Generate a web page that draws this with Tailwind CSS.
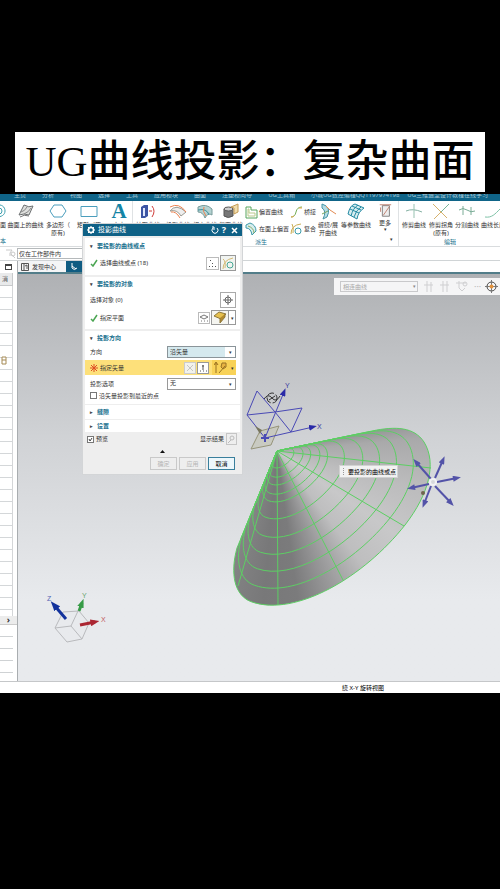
<!DOCTYPE html>
<html lang="zh-CN">
<head>
    <meta charset="UTF-8">
    <meta name="viewport" content="width=device-width, initial-scale=1.0">
    <title>UG曲线投影：复杂曲面</title>
    <script src="https://cdn.jsdelivr.net/npm/@tailwindcss/browser@4"></script>
</head>
<body class="min-h-screen bg-black pt-[132px] font-['Noto_Sans','Noto_Sans_CJK_SC',sans-serif] text-[6px] leading-[8px] text-[#333]">
    <!-- Title -->
    <h1 class="mx-[15px] flex h-[60px] items-center justify-center bg-white font-['Liberation_Serif','Noto_Sans_CJK_SC',serif] text-[43px] leading-[60px] font-medium whitespace-nowrap text-black">UG曲线投影：复杂曲面</h1>

    <!-- Application window -->
    <main class="relative mt-[2px] bg-white">
        <!-- Menu bar -->
        <nav class="flex h-[7px] items-end gap-[16px] overflow-hidden bg-[#0f6488] pl-[14px] text-[6px] leading-[11px] whitespace-nowrap text-[#a9cbd9]">
            <a href="#" class="block h-[11px]">主页</a>
            <a href="#" class="block h-[11px]">分析</a>
            <a href="#" class="block h-[11px]">视图</a>
            <a href="#" class="block h-[11px]">选择</a>
            <a href="#" class="block h-[11px]">工具</a>
            <a href="#" class="block h-[11px]">应用模块</a>
            <a href="#" class="block h-[11px]">曲面</a>
            <a href="#" class="block h-[11px]">注塑模向导</a>
            <a href="#" class="block h-[11px]">UG工具箱</a>
            <a href="#" class="block h-[11px]">小城UG数控编程QQ1197974198</a>
            <a href="#" class="-ml-2 block h-[11px]">UG三维造型设计教程在线学习</a>
        </nav>

        <!-- Ribbon -->
        <div class="flex h-[46px] overflow-hidden border-b border-[#d9dcde] text-[6px] leading-[8px] text-[#333]">
            <div class="flex flex-none pt-[2px]">
                <button class="flex w-[7px] flex-col items-end">
                    <svg class="mb-px h-[17px] w-[7px]" viewBox="0 0 7 17" fill="none" stroke="#3d9fae"><path d="M-4 2C2 1 5 4 5 8S1 14-3 14"/><circle cx="-1" cy="8" r="3"/></svg>
                    <span class="mr-px">面</span>
                    <span class="mt-[8px] mr-px text-[#17708e]">本</span>
                </button>
                <button class="flex w-[37px] flex-col items-center whitespace-nowrap">
                    <svg class="mb-px h-[17px] w-[18px]" viewBox="0 0 18 17" fill="none"><path d="M2 12 7 2Q12 5 16 3L12 12Q7 10 2 12Z" fill="#dedfdd" stroke="#6b6f70"/><path d="M4 9Q8 8 10 4M7 11Q12 9 14 5" stroke="#888"/><path d="M3 14Q7 11 12 13" stroke="#777"/></svg>
                    <span>曲面上的曲线</span>
                </button>
                <button class="flex w-[28px] flex-col items-center whitespace-nowrap">
                    <svg class="mb-px h-[17px] w-[18px]" viewBox="0 0 18 17" fill="none"><path d="M5 2H13L17 8 13 14H5L1 8Z" stroke="#4b9ebd"/></svg>
                    <span>多边形（</span><span>原有)</span>
                </button>
                <button class="flex w-[34px] flex-col items-center whitespace-nowrap">
                    <svg class="mb-px h-[17px] w-[18px]" viewBox="0 0 18 17" fill="none"><path d="M1 3.5H17V13.5H1Z" stroke="#4b9ebd"/></svg>
                    <span>矩形（原</span>
                </button>
                <button class="flex w-[26px] flex-col items-center whitespace-nowrap">
                    <span class="mb-px h-[17px] font-['Liberation_Serif',serif] text-[21px] leading-[17px] font-bold text-[#1484a5]">A</span>
                    <span>文本</span>
                </button>
            </div>
            <div class="flex flex-none gap-[2px] border-l border-[#dfe2e4] pt-[2px]">
                <button class="flex w-[30px] flex-col items-center whitespace-nowrap">
                    <svg class="mb-px h-[17px] w-[18px]" viewBox="0 0 18 17" fill="none"><path d="M2 4 5 2H9V13L6 15H2Z" fill="#3c55a4"/><path d="M4 5H6V13H4Z" fill="#dfe7fb"/><path d="M10 8H13M13 3Q17 8 13 14" stroke="#cf3b38"/></svg>
                    <span>抽取曲线</span>
                </button>
                <button class="flex w-[26px] flex-col items-center whitespace-nowrap">
                    <svg class="mb-px h-[17px] w-[18px]" viewBox="0 0 18 17" fill="none"><path d="M1 8Q7 0 17 9L12 13Q8 6 1 8Z" fill="#eee" stroke="#9a9a92"/><path d="M1 4Q10-1 17 9M2 9Q7 8 11 15" stroke="#ed8250"/></svg>
                    <span>投影曲线</span>
                </button>
                <button class="flex w-[24px] flex-col items-center whitespace-nowrap">
                    <svg class="mb-px h-[17px] w-[18px]" viewBox="0 0 18 17" fill="none"><path d="M2 4Q10 0 16 6V12Q12 9 9 15Q7 9 2 9Z" fill="#b5d3d2" stroke="#789b9b"/><path d="M2 7Q11 5 13 12" stroke="#368e9e"/><path d="M8 4Q6 8 10 13" stroke="#ed8250"/></svg>
                    <span>相交曲线</span>
                </button>
                <button class="flex w-[24px] flex-col items-center whitespace-nowrap">
                    <svg class="mb-px h-[17px] w-[18px]" viewBox="0 0 18 17" fill="none"><path d="M2 6V13Q6 16 11 13V6" fill="#777" stroke="#555"/><ellipse cx="6.500" cy="6" rx="4.500" ry="2" fill="#ccc" stroke="#555"/><path d="M9 4 16 1V9L12 11V5Z" fill="#f1ddad" stroke="#c49c55"/></svg>
                    <span>截面曲线</span>
                </button>
            </div>
            <div class="ml-[2px] flex w-[71px] flex-none flex-col pt-[2px]">
                <div class="grid grid-cols-[45px_26px] whitespace-nowrap">
                    <button class="flex h-[17px] items-center gap-px text-left">
                        <svg class="h-[14px] w-[13px] flex-none" viewBox="0 0 13 14" fill="none"><path d="M1 2H6V5H12V13H1Z" stroke="#56a45c"/><path d="M3 4H4V8H10V11H3Z" stroke="#bac98b"/></svg>偏置曲线
                    </button>
                    <button class="flex h-[17px] items-center gap-px">
                        <svg class="h-[14px] w-[13px] flex-none" viewBox="0 0 13 14" fill="none"><path d="M1 12Q5 12 6 7T12 2" stroke="#75ad55"/><path d="M1 12Q3 12 4 11M9 3H12" stroke="#e7a949"/></svg>桥接
                    </button>
                    <button class="flex h-[17px] items-center gap-px">
                        <svg class="h-[14px] w-[13px] flex-none" viewBox="0 0 13 14" fill="none"><path d="M1 3 5 1Q11 3 11 9L7 13Q6 6 1 6Z" fill="#d7edef" stroke="#3e99a7"/><path d="M3 4Q9 6 9 11" stroke="#8aae63"/></svg>在面上偏置
                    </button>
                    <button class="flex h-[17px] items-center gap-px">
                        <svg class="h-[14px] w-[13px] flex-none" viewBox="0 0 13 14" fill="none"><path d="M1 12Q1 3 11 2M2 2Q4 5 3 11" stroke="#cbae55"/><circle cx="8" cy="9" r="3" stroke="#3a9baa"/></svg>复合
                    </button>
                </div>
                <span class="mt-px ml-[10px] text-[#17708e]">派生</span>
            </div>
            <div class="flex flex-none border-r border-[#dfe2e4] pt-[2px]">
                <button class="flex w-[24px] flex-col items-center whitespace-nowrap">
                    <svg class="mb-px h-[17px] w-[18px]" viewBox="0 0 18 17" fill="none"><path d="M3 1Q13 4 8 14L4 16Q8 8 3 5Z" fill="#b5dce4" stroke="#4795a6"/><path d="M7 3Q10 7 17 11" stroke="#e28a51"/><path d="M3 11 9 8" stroke="#7aa45f"/></svg>
                    <span>缠绕/展</span><span>开曲线</span>
                </button>
                <button class="flex w-[32px] flex-col items-center whitespace-nowrap">
                    <svg class="mb-px h-[17px] w-[18px]" viewBox="0 0 18 17" fill="none" stroke="#258ba4"><path d="M1 11Q3 2 8 1L17 5Q11 9 10 16Z" fill="#d6edf0"/><path d="M4 13Q6 5 11 2M7 14Q9 7 14 4M3 6 12 10M5 3 14 7"/></svg>
                    <span>等参数曲线</span>
                </button>
                <button class="flex w-[26px] flex-col items-center">
                    <svg class="mb-px h-[17px] w-[18px]" viewBox="0 0 18 17" fill="none"><path d="M6 3H14V15H6Z" fill="#eee" stroke="#777"/><path d="M3 2H16M4 5V10M14 4 7 14" stroke="#bc7966"/></svg>
                    <span>更多</span><span class="text-[5px] leading-[5px]">▾</span>
                    <span class="ml-3 text-[5px] leading-[14px]">▾</span>
                </button>
            </div>
            <div class="flex flex-auto flex-col pt-[2px] pl-px">
                <div class="flex h-[35px] whitespace-nowrap">
                    <button class="flex w-[28px] flex-none flex-col items-center">
                        <svg class="mb-px h-[17px] w-[18px]" viewBox="0 0 18 17" fill="none"><path d="M1 8Q8 5 17 9" stroke="#86b2a4"/><path d="M9 1V15" stroke="#98c2b1"/></svg>
                        <span>修剪曲线</span>
                    </button>
                    <button class="flex w-[26px] flex-none flex-col items-center">
                        <svg class="mb-px h-[17px] w-[18px]" viewBox="0 0 18 17" fill="none"><path d="M1 1 15 15" stroke="#d6b16c"/><path d="M17 1 9 9" stroke="#78b498"/><path d="M9 9 2 16" stroke="#d6b16c"/></svg>
                        <span>修剪拐角</span><span>(原有)</span>
                    </button>
                    <button class="flex w-[26px] flex-none flex-col items-center">
                        <svg class="mb-px h-[17px] w-[18px]" viewBox="0 0 18 17" fill="none"><path d="M1 7Q5 4 9 7T17 8M5 3V12M13 4V12" stroke="#7aac96"/></svg>
                        <span>分割曲线</span>
                    </button>
                    <button class="flex w-[26px] flex-none flex-col items-center">
                        <svg class="mb-px h-[17px] w-[18px]" viewBox="0 0 18 17" fill="none"><path d="M1 14C8 15 11 11 16 6" stroke="#7ec2a7"/></svg>
                        <span>曲线长度</span>
                    </button>
                </div>
                <span class="ml-[44px] text-[#17708e]">编辑</span>
            </div>
        </div>

        <!-- Selection filter -->
        <div class="flex h-[14px] items-center border-b border-[#d0d4d6]">
            <svg class="ml-[5px] h-[10px] w-[12px]" viewBox="0 0 12 10" fill="none" stroke="#c9c9c9"><path d="M1 1H7L5 4V7M6 5 10 9"/><circle cx="8" cy="5" r="2"/></svg>
            <label for="scope" class="sr-only">选择范围</label>
            <select id="scope" class="h-[11px] w-[180px] appearance-none border border-[#b5b9bb] bg-white px-px text-[6px] leading-[8px]">
                <option>仅在工作部件内</option>
            </select>
        </div>

        <div class="flex">
            <!-- Resource bar -->
            <aside class="flex w-[18px] flex-none flex-col border-r border-[#a9adb0]">
                <div class="flex h-[12px] items-center justify-center"><span class="block h-[6px] w-[7px] border border-t-2 border-[#444]"></span></div>
                <div class="mr-1 flex h-[13px] items-center border-r border-b border-[#c7c9cb] bg-[#e9eaeb] pl-[2px] text-[6px] text-[#555]">消</div>
                <div class="mr-1 h-[330px] border-r border-[#d4d6d8] bg-[repeating-linear-gradient(to_bottom,#fff_0,#fff_11px,#d4d7d9_11px,#d4d7d9_12px)] pt-[70px]">
                    <svg class="ml-[1px] h-[9px] w-[6px]" viewBox="0 0 6 9" fill="#fff" stroke="#a58a55"><path d="M1 1H5V8H1ZM1 4H5"/></svg>
                </div>
                <div class="flex h-[9px] items-center justify-center border-b border-[#ccc] bg-[#ececec] text-[9px] font-bold">›</div>
                <div class="mr-1 flex-auto bg-[repeating-linear-gradient(to_bottom,#fff_0,#fff_11px,#cfd2d4_11px,#cfd2d4_12px)]"></div>
            </aside>

            <div class="min-w-0 flex-auto">
                <!-- Document tabs -->
                <div class="flex h-[13px] border-b-2 border-[#527d89]">
                    <button class="flex w-[48px] items-center gap-[3px] bg-[#f4f5f6] pl-[3px]">
                        <svg class="h-[8px] w-[8px]" viewBox="0 0 8 8" fill="none" stroke="#555"><path d="M.5.5H7.500V7.500H.5ZM3 0V8M4 3 6 2V6"/></svg>发现中心
                    </button>
                    <button class="w-[24px] bg-[#0f5c82] pl-[4px]" aria-label="模型">
                        <svg class="h-[8px] w-[8px]" viewBox="0 0 8 8" fill="none" stroke="#fff"><path d="M2 0V5Q4 8 7 5M2 3 6 6"/></svg>
                    </button>
                </div>

                <!-- Graphics window -->
                <div class="relative h-[407px] overflow-hidden bg-linear-to-b from-[#afb1b4] via-[#d0d2d5] via-40% to-[#e8eaed] to-80%">
                    <svg class="h-[407px] w-[482px]" viewBox="18 275 482 407" fill="none">
                        <defs>
                            <path id="rim" d="M277 452 237 549C230 574 234 597 252 603C296 618 364 578 405 526C429 495 437 464 424 443C414 428 396 427 372 432Z" vector-effect="non-scaling-stroke"/>
                            <clipPath id="cone"><use href="#rim"/></clipPath>
                            <marker id="tip" viewBox="0 0 8 6" refX="4" refY="3" markerWidth="8" markerHeight="6" markerUnits="userSpaceOnUse" orient="auto"><path d="M0 0 8 3 0 6Z" fill="#2929a7"/></marker>
                            <marker id="tipRed" viewBox="0 0 8 6" refX="4" refY="3" markerWidth="9" markerHeight="7" markerUnits="userSpaceOnUse" orient="auto"><path d="M0 0 8 3 0 6Z" fill="#ab2632"/></marker>
                            <marker id="tipGreen" viewBox="0 0 8 6" refX="4" refY="3" markerWidth="9" markerHeight="7" markerUnits="userSpaceOnUse" orient="auto"><path d="M0 0 8 3 0 6Z" fill="#369b46"/></marker>
                            <marker id="tipBlue" viewBox="0 0 8 6" refX="4" refY="3" markerWidth="10" markerHeight="8" markerUnits="userSpaceOnUse" orient="auto"><path d="M0 0 8 3 0 6Z" fill="#12329c"/></marker>
                            <marker id="tipViolet" viewBox="0 0 8 6" refX="4" refY="3" markerWidth="9" markerHeight="6" markerUnits="userSpaceOnUse" orient="auto"><path d="M0 0 8 3 0 6Z" fill="#5353a8"/></marker>
                        </defs>

                        <!-- projected cone -->
                        <foreignObject x="217" y="422" width="230" height="190" clip-path="url(#cone)">
                            <div class="h-[190px] w-[230px] bg-[conic-gradient(at_60px_30px,#8f9091_0deg,#8f9091_76deg,#a9a9aa_85deg,#bcbcbd_105deg,#c8c8c9_125deg,#bebebf_143deg,#9a9a9b_158deg,#7b7b7c_172deg,#787879_185deg,#858586_203deg,#8f9091_360deg)]"></div>
                        </foreignObject>
                        <g stroke="#5ccf63" stroke-width="1">
                            <use href="#rim"/>
                            <use href="#rim" transform="translate(277 452) scale(.89) translate(-277 -452)"/>
                            <use href="#rim" transform="translate(277 452) scale(.78) translate(-277 -452)"/>
                            <use href="#rim" transform="translate(277 452) scale(.67) translate(-277 -452)"/>
                            <use href="#rim" transform="translate(277 452) scale(.56) translate(-277 -452)"/>
                            <use href="#rim" transform="translate(277 452) scale(.44) translate(-277 -452)"/>
                            <use href="#rim" transform="translate(277 452) scale(.33) translate(-277 -452)"/>
                            <use href="#rim" transform="translate(277 452) scale(.28) translate(-277 -452)"/>
                            <use href="#rim" transform="translate(277 452) scale(.22) translate(-277 -452)"/>
                            <use href="#rim" transform="translate(277 452) scale(.17) translate(-277 -452)"/>
                            <use href="#rim" transform="translate(277 452) scale(.11) translate(-277 -452)"/>
                            <path d="M277 452 238 587M277 452 278 606M277 452 343 581M277 452 404 527M277 452 431 469"/>
                        </g>

                        <!-- datum coordinate system -->
                        <path d="M260 432 279 427 271 446 251 450Z" stroke="#96947a" fill="#bbb99a" fill-opacity=".35"/>
                        <g stroke="#4949b5">
                            <path d="M257 392 247 416 275 413ZM275 413 291 433 302 409ZM247 416 265 439"/>
                            <path d="M265 439 313 428" marker-end="url(#tip)"/>
                            <path d="M265 439 284 393" marker-end="url(#tip)"/>
                            <path d="M261 439H269M265 435V443" stroke-width="2"/>
                        </g>
                        <path d="M255 427 260 435 262 431Z" fill="#77755c"/>
                        <g stroke="#333"><circle cx="272" cy="399" r="5" stroke-dasharray="7 2"/><path d="M264 400Q268 394 272 399T280 397M269 401 275 397"/></g>
                        <g fill="#3a3a9f" font-family="Liberation Sans" font-size="7">
                            <text x="317" y="430">X</text><text x="285" y="389">Y</text>
                        </g>

                        <!-- rotation handle -->
                        <g stroke="#5353a8" stroke-width="2">
                            <path d="M431 480 416 463" marker-end="url(#tipViolet)"/><path d="M435 479 443 461" marker-end="url(#tipViolet)"/><path d="M437 483 457 479" marker-end="url(#tipViolet)"/>
                            <path d="M435 487 451 504" marker-end="url(#tipViolet)"/><path d="M431 487 424 505" marker-end="url(#tipViolet)"/><path d="M429 485 411 489" marker-end="url(#tipViolet)"/>
                        </g>
                        <circle cx="433" cy="483" r="3" stroke="#f1f1f5" stroke-width="2"/>
                        <circle cx="423" cy="494" r="2" fill="#70644e"/>

                        <!-- view triad -->
                        <path d="M55 629 63 613 79 612 89 624 82 640 67 643ZL71 627 82 640M71 627 78 612" stroke="#b9babd"/>
                        <path d="M66 620 54 606" stroke="#12329c" stroke-width="3" marker-end="url(#tipBlue)"/>
                        <path d="M79 612 82 604" stroke="#369b46" stroke-width="3" marker-end="url(#tipGreen)"/>
                        <path d="M80 626 95 623" stroke="#ab2632" stroke-width="3" marker-end="url(#tipRed)"/>
                        <g font-family="Liberation Sans" font-size="7">
                            <text x="47" y="602" fill="#5464b5">Z</text><text x="82" y="599" fill="#68a46f">Y</text><text x="101" y="623" fill="#c25a62">X</text>
                        </g>
                    </svg>

                    <!-- Selection toolbar -->
                    <div class="absolute top-[4px] right-0 flex h-[17px] w-[166px] items-center gap-[6px] bg-[#f5f5f6] pl-[6px]">
                        <div class="relative">
                            <label for="rule" class="sr-only">曲线规则</label>
                            <select id="rule" class="block h-[11px] w-[78px] appearance-none border border-[#c9c9cb] bg-[#f5f5f6] px-[2px] text-[6px] leading-[8px] text-[#aaa]"><option>相连曲线</option></select>
                            <span class="pointer-events-none absolute top-px right-[2px] text-[5px] text-[#888]">▾</span>
                        </div>
                        <svg class="h-[13px] w-[48px] flex-none" viewBox="0 0 48 13" fill="none" stroke="#cfcfd1"><path d="M3 1V12M0 5H9M7 2V12M19 1V12M16 5H25M23 1V12M32 3H42M35 1V8L38 11 41 8"/><circle cx="41" cy="4" r="2"/></svg>
                        <span class="-ml-1 text-[9px] text-[#bbb]">···</span>
                        <svg class="-ml-[2px] h-[13px] w-[13px] flex-none" viewBox="0 0 13 13" fill="none"><circle cx="6.500" cy="6.500" r="4.500" stroke="#444"/><path d="M6.500 0V13M0 6.500H13" stroke="#777"/><circle cx="6.500" cy="6.500" r="2" fill="#e2923d"/></svg>
                    </div>

                    <div role="tooltip" class="absolute top-[191px] left-[321px] flex h-[13px] w-[59px] items-center gap-[4px] border border-[#d2d2d2] bg-[#f2f2f2] pl-[3px] whitespace-nowrap text-black">
                        <span class="h-[7px] border-l border-dotted border-[#999]"></span>要投影的曲线或点
                    </div>
                </div>
            </div>
        </div>

        <!-- Status bar -->
        <footer class="flex h-[12px] items-center border-t border-[#c5c7c9] pl-[342px] text-black">绕 X-Y 旋转视图</footer>

        <!-- Project curve dialog -->
        <section class="absolute top-[29px] left-[82px] w-[161px] border border-[#d3d5d7] bg-[#eee]">
            <header class="flex h-[12px] items-center bg-[#0f6186] px-[4px] text-[7px] text-white">
                <svg class="mr-[3px] h-[8px] w-[8px]" viewBox="0 0 8 8" fill="none" stroke="#fff"><circle cx="4" cy="4" r="2.500" stroke-width="1.500"/><path d="M4 0V1M4 7V8M0 4H1M7 4H8M1 1 2 2M6 6 7 7M7 1 6 2M1 7 2 6"/></svg>
                <h2>投影曲线</h2>
                <button class="ml-auto" aria-label="重置"><svg class="h-[8px] w-[8px]" viewBox="0 0 8 8" fill="none" stroke="#fff"><path d="M2 2A3 3 0 1 0 6 2M1 1H3V4"/></svg></button>
                <button class="ml-[3px] text-[9px] font-bold" aria-label="帮助">?</button>
                <button class="ml-[5px]" aria-label="关闭"><svg class="h-[7px] w-[7px]" viewBox="0 0 7 7" stroke="#fff" stroke-width="1.500"><path d="M1 1 6 6M6 1 1 6"/></svg></button>
            </header>
            <div class="flex flex-col gap-[2px] px-[2px] pt-[2px]">
                <div class="bg-white pr-[4px] pb-[3px] pl-[5px]">
                    <h3 class="flex h-[16px] items-center font-bold text-[#17708e]"><span class="w-[7px] text-[5px] text-[#444]">▾</span>要投影的曲线或点</h3>
                    <div class="flex h-[18px] items-center">
                        <svg class="mr-[2px] h-[8px] w-[8px]" viewBox="0 0 8 8" fill="none" stroke="#4aa552" stroke-width="1.500"><path d="M1 5 3 7 7 1"/></svg>
                        <span>选择曲线或点 (18)</span>
                        <button class="ml-auto h-[13px] w-[13px] border border-[#bbb]" aria-label="点"><svg viewBox="0 0 11 11" fill="#555"><path d="M3 2H4V3H3ZM2 8H3V9H2ZM5 8H6V9H5ZM8 8H9V9H8ZM5 5H6V6H5Z"/></svg></button>
                        <button class="ml-px h-[16px] w-[16px] border border-[#999] bg-[#f1f4f1]" aria-label="曲线"><svg viewBox="0 0 14 14" fill="none"><path d="M2 13Q2 4 12 2M2 3Q5 5 4 12" stroke="#d4ba75"/><circle cx="9" cy="9" r="3" stroke="#48a795"/></svg></button>
                    </div>
                </div>
                <div class="bg-white pr-[4px] pb-[3px] pl-[5px]">
                    <h3 class="flex h-[13px] items-center font-bold text-[#17708e]"><span class="w-[7px] text-[5px] text-[#444]">▾</span>要投影的对象</h3>
                    <div class="flex h-[19px] items-center justify-between">
                        <span>选择对象 (0)</span>
                        <button class="h-[16px] w-[16px] border border-[#aaa]" aria-label="选择对象"><svg viewBox="0 0 14 14" fill="none" stroke="#666"><circle cx="7" cy="7" r="3"/><path d="M7 2V12M2 7H12"/></svg></button>
                    </div>
                    <div class="flex h-[17px] items-center">
                        <svg class="mr-[2px] h-[8px] w-[8px]" viewBox="0 0 8 8" fill="none" stroke="#4aa552" stroke-width="1.500"><path d="M1 5 3 7 7 1"/></svg>
                        <span>指定平面</span>
                        <button class="ml-auto h-[12px] w-[12px] border border-[#bbb]" aria-label="平面对话框"><svg viewBox="0 0 10 10" fill="none" stroke="#777"><path d="M1 4 5 2 9 4 5 6ZM2 8H3M5 8H6M8 8H9"/></svg></button>
                        <button class="ml-px h-[15px] w-[18px] border border-[#999] bg-[#f5f5f0]" aria-label="平面类型"><svg viewBox="0 0 16 13"><path d="M2 5 7 1 14 3 9 8Z" fill="#e6c04e" stroke="#8d773b"/><path d="M8 7V12L13 6V3" fill="#b28a2d" stroke="#8d773b"/></svg></button>
                        <button class="h-[15px] w-[7px] border border-l-0 border-[#999] text-[5px]" aria-label="更多平面">▾</button>
                    </div>
                </div>
                <div class="bg-white pb-[4px]">
                    <h3 class="flex h-[13px] items-center pl-[5px] font-bold text-[#17708e]"><span class="w-[7px] text-[5px] text-[#444]">▾</span>投影方向</h3>
                    <div class="flex h-[16px] items-center justify-between pr-[4px] pl-[5px]">
                        <label for="direction">方向</label>
                        <div class="relative">
                            <select id="direction" class="block h-[12px] w-[69px] appearance-none border border-[#8a9499] bg-[#d5e9ee] px-[2px] leading-[9px]"><option>沿矢量</option></select>
                            <span class="pointer-events-none absolute top-px right-px flex h-[10px] w-[10px] items-center justify-center bg-white text-[5px]">▾</span>
                        </div>
                    </div>
                    <div class="mr-[4px] flex h-[15px] items-center bg-[#fde07a] pl-[5px]">
                        <svg class="mr-[2px] h-[8px] w-[8px]" viewBox="0 0 8 8" stroke="#de4d24"><path d="M4 0V8M1 1 7 7M7 1 1 7M0 4H8"/></svg>
                        <span>指定矢量</span>
                        <button class="ml-auto h-[12px] w-[12px] border border-[#ccc] bg-[#f2f2ec]" aria-label="反向"><svg viewBox="0 0 10 10" stroke="#c5c5c2"><path d="M2 2 8 8M8 2 2 8"/></svg></button>
                        <button class="ml-px h-[12px] w-[12px] border border-[#999] bg-white" aria-label="矢量对话框"><svg viewBox="0 0 10 10" stroke="#555" fill="none"><path d="M5 7V2M4 3H6M2 8H3M5 8H6M8 8H9"/></svg></button>
                        <button class="ml-[3px] flex h-[15px] w-[24px] items-center justify-between bg-[#f8d258] px-[2px] text-[5px]" aria-label="矢量类型"><svg class="h-[13px] w-[13px]" viewBox="0 0 13 13" fill="none" stroke="#997323"><path d="M2 12V2M0 4 2 1 4 4M5 12 11 5M7 6 8 2H12V6L9 8Z" fill="#e7b342"/></svg>▾</button>
                    </div>
                    <div class="mt-px flex h-[15px] items-center justify-between pr-[4px] pl-[5px]">
                        <label for="option">投影选项</label>
                        <div class="relative">
                            <select id="option" class="block h-[12px] w-[69px] appearance-none border border-[#999] bg-white px-[2px] leading-[9px]"><option>无</option></select>
                            <span class="pointer-events-none absolute top-px right-px flex h-[10px] w-[10px] items-center justify-center text-[5px]">▾</span>
                        </div>
                    </div>
                    <label class="flex h-[9px] items-center gap-[2px] pl-[5px]"><input type="checkbox" class="h-[7px] w-[7px] appearance-none border border-[#777] bg-white">沿矢量投影到最近的点</label>
                </div>
                <h3 class="-mt-px flex h-[14px] items-center bg-white pl-[5px] font-bold text-[#17708e]"><span class="w-[7px] text-[5px] text-[#444]">▸</span>缝隙</h3>
                <h3 class="-mt-px flex h-[12px] items-center bg-white pl-[5px] font-bold text-[#17708e]"><span class="w-[7px] text-[5px] text-[#444]">▸</span>设置</h3>
            </div>
            <div class="flex h-[14px] items-center justify-between pr-[5px] pl-[4px]">
                <label class="flex items-center gap-[2px]">
                    <span class="relative flex"><input type="checkbox" checked class="h-[7px] w-[7px] appearance-none border border-[#777] bg-white"><svg class="pointer-events-none absolute h-[7px] w-[7px]" viewBox="0 0 7 7" fill="none" stroke="#444"><path d="M2 3 3 5 5 2"/></svg></span>预览
                </label>
                <div class="flex items-center gap-[2px]"><span>显示结果</span>
                    <button class="h-[12px] w-[11px] border border-[#c5c5c5]" aria-label="显示结果"><svg viewBox="0 0 9 10" fill="none" stroke="#bbb"><circle cx="5" cy="4" r="2"/><path d="M4 6 1 9"/></svg></button>
                </div>
            </div>
            <button class="flex h-[11px] w-full items-center justify-center" aria-label="折叠"><svg class="h-[3px] w-[5px]" viewBox="0 0 5 3"><path d="M0 3 2.500 0 5 3Z" fill="#111"/></svg></button>
            <div class="flex justify-end gap-[2px] pr-[7px] pb-[4px]">
                <button class="h-[13px] w-[27px] border border-[#c9c9c9] text-[#b5b5b5]">确定</button>
                <button class="h-[13px] w-[27px] border border-[#c9c9c9] text-[#b5b5b5]">应用</button>
                <button class="h-[13px] w-[27px] border border-[#397f9c] bg-[#edf7fb] text-black">取消</button>
            </div>
        </section>
    </main>
</body>
</html>
